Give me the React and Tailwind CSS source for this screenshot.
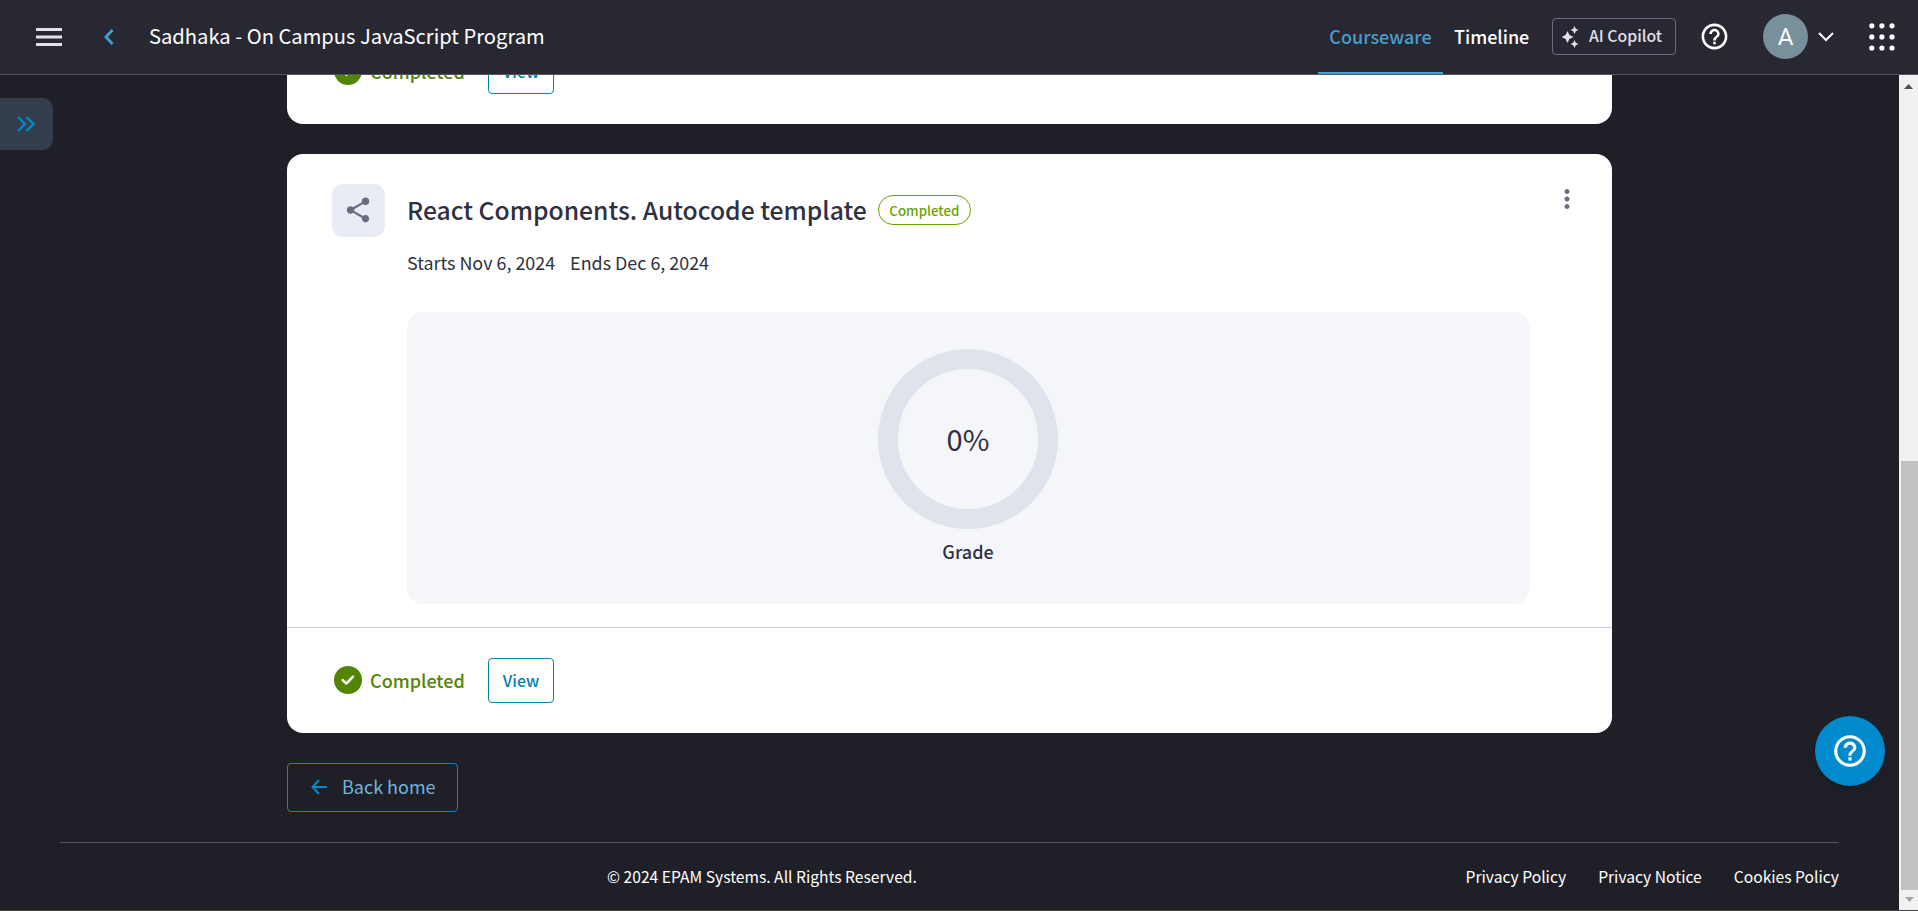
import { MdHelpOutline, MdShare, MdMoreVert } from "react-icons/md";

const font = "font-['Noto_Sans_CJK_SC','Noto_Sans_CJK_JP',sans-serif]";

function StatusRow() {
  return (
    <div className="flex h-[45px] shrink-0 items-center pl-[47px]">
      <svg width="28" height="28" viewBox="0 0 28 28" className="mb-[1px] shrink-0">
        <circle cx="14" cy="14" r="14" fill="#528500" />
        <path d="M8.8 14.2l3.6 3.4 6.6-7" fill="none" stroke="#fff" strokeWidth="2.6" strokeLinecap="round" strokeLinejoin="round" />
      </svg>
      <span className="ml-[8px] w-[94px] whitespace-nowrap pb-[2px] text-[18px] font-medium leading-6 text-[#528500]">Completed</span>
      <button className="ml-[24px] flex h-[45px] w-[66px] items-center justify-center rounded-[4px] border border-[#0083ad] pb-[2px] text-[16px] font-medium text-[#0083ad]">View</button>
    </div>
  );
}

function Header() {
  return (
    <header className="flex h-[75px] shrink-0 items-center border-b border-[#55555f] bg-[#282833]">
      <svg className="ml-9 shrink-0" width="26" height="18" viewBox="0 0 26 18" fill="#e1e0eb">
        <rect width="26" height="3" />
        <rect y="7.5" width="26" height="3" />
        <rect y="15" width="26" height="3" />
      </svg>
      <svg className="ml-[42px] shrink-0" width="10" height="16" viewBox="0 0 10 16" fill="none" stroke="#459fce" strokeWidth="2.8">
        <path d="M8.5 1L2 8l6.500 7" />
      </svg>
      <h1 className="ml-[35px] whitespace-nowrap pb-[2px] text-[20.16px] leading-7 text-white">Sadhaka - On Campus JavaScript Program</h1>
      <nav className="ml-auto flex h-full items-center">
        <a className="flex h-full w-[125px] items-center justify-center border-b-2 border-[#459fce] text-[18px] font-medium text-[#459fce]">Courseware</a>
        <a className="ml-[11px] w-[75px] pb-[2px] text-[18px] font-medium text-white">Timeline</a>
      </nav>
      <button className="mb-[1px] ml-[23px] flex h-[37px] w-[124px] items-center rounded-[4px] border border-[#6c6b7f] pl-[9px] text-[15.8px] font-medium text-[#e1e0eb]">
        <svg width="17" height="22" viewBox="0 0 17 22" fill="#e1e0eb" className="mr-[10px] shrink-0">
          <path d="M5.500 5l1.900 4.100L11.500 11l-4.100 1.900L5.500 17l-1.900-4.100L-.5 11l4.100-1.900z" />
          <path d="M12.500 0l1.300 2.700L16.500 4l-2.700 1.300L12.500 8l-1.300-2.700L8.500 4l2.700-1.300z" />
          <path d="M12.500 14l1.300 2.700L16.500 18l-2.700 1.300L12.500 22l-1.300-2.700L8.500 18l2.700-1.300z" />
        </svg>
        <span className="whitespace-nowrap pb-[1px]">AI Copilot</span>
      </button>
      <MdHelpOutline className="mb-[1px] ml-[22.500px] shrink-0 text-white" size={31} />
      <div className="mb-[1px] ml-[33.500px] flex size-[45px] shrink-0 items-center justify-center rounded-full bg-[#78909c] pt-[1px] font-['Roboto',sans-serif] text-[24px] text-white">A</div>
      <svg className="mb-[1px] ml-[10px] shrink-0" width="16" height="10" viewBox="0 0 16 10" fill="none" stroke="#fff" strokeWidth="2">
        <path d="M1 1l7 7 7-7" />
      </svg>
      <svg className="ml-[35px] mr-[23px] shrink-0" width="26" height="28" viewBox="0 0 26 28" fill="#fff">
        {[2.8, 13.9, 25].map((y) => [2.8, 12.9, 23].map((x) => <circle key={x + "-" + y} cx={x} cy={y} r="2.600" />))}
      </svg>
    </header>
  );
}

function Scrollbar() {
  return (
    <div className="flex w-[19px] shrink-0 flex-col items-end bg-[#f1f1f1]">
      <svg width="18" height="21" viewBox="0 0 18 21" fill="#505050"><path d="M4 14l4.500-5 4.500 5z" /></svg>
      <div className="mt-[365px] h-[429px] w-[17px] bg-[#c1c1c1]" />
      <svg className="shrink-0" width="18" height="20" viewBox="0 0 18 20" fill="#a3a3a3"><path d="M5 7h9l-4.500 5z" /></svg>
    </div>
  );
}

export default function App() {
  return (
    <div className={"flex h-[911px] w-[1918px] flex-col overflow-hidden bg-[#1f1f27] " + font}>
      <Header />
      <div className="flex h-[835px] shrink-0">
        <div className="flex h-full w-[1899px] shrink-0 flex-col overflow-hidden">
          <div className="flex h-[767px] shrink-0">
            <div className="w-[287px] shrink-0 pt-[23px]">
              <button className="flex h-[52px] w-[53px] items-center rounded-r-[11px] bg-[#333e4d] pl-[17px]">
                <svg width="18" height="16" viewBox="0 0 18 16" fill="none" stroke="#008ace" strokeWidth="2.400">
                  <path d="M1 1l7 7-7 7M9.500 1l7 7-7 7" />
                </svg>
              </button>
            </div>
            <main className="flex w-[1325px] shrink-0 flex-col">
              <section className="flex h-[49px] shrink-0 flex-col justify-end overflow-hidden rounded-b-[16px] bg-white pb-[30px]">
                <StatusRow />
              </section>
              <section className="mt-[30px] flex h-[579px] shrink-0 flex-col rounded-[16px] bg-white">
                <div className="flex h-[158px] pt-[30px]">
                  <div className="ml-[45px] flex size-[53px] items-center justify-center rounded-[11px] bg-[#e9ecf5] pb-[2px] pr-[2px]">
                    <MdShare size={30} className="text-[#6c6b7f]" />
                  </div>
                  <div className="ml-[22px] flex flex-col">
                    <div className="flex h-[52px] items-center">
                      <h2 className="whitespace-nowrap pb-[1px] text-[24.7px] font-medium text-[#303040]">React Components. Autocode template</h2>
                      <span className="ml-[11px] flex h-[30px] w-[93px] items-center justify-center rounded-full border border-[#67a300] pt-[1px] text-[13.3px] font-medium text-[#67a300]">Completed</span>
                    </div>
                    <div className="mt-[13px] flex gap-[15px] text-[17.9px] leading-[27px] text-[#303040]">
                      <span>Starts Nov 6, 2024</span>
                      <span>Ends Dec 6, 2024</span>
                    </div>
                  </div>
                  <MdMoreVert size={30} className="ml-auto mr-[30px] text-[#6c6b7f]" />
                </div>
                <div className="ml-[120px] flex h-[292px] w-[1123px] flex-col items-center rounded-[16px] bg-[#f4f6fa] pr-[1px] pt-[37px]">
                  <div className="flex size-[180px] items-center justify-center rounded-full border-[20px] border-[#e0e3eb] text-[29px] text-[#303040]">0%</div>
                  <span className="mt-[9px] text-[18px] font-medium leading-[27px] text-[#303040]">Grade</span>
                </div>
                <div className="mt-[23px] border-t border-[#cdcdd8] pt-[30px]">
                  <StatusRow />
                </div>
              </section>
              <button className="mt-[30px] flex h-[49px] w-[171px] items-center rounded-[4px] border border-[#008ace] pb-[1px] pl-[23px] text-[18px] text-[#70b4dd]">
                <svg width="16" height="16" viewBox="0 0 16 16" fill="none" stroke="#008ace" strokeWidth="2" className="mr-[15px] shrink-0">
                  <path d="M8 1L1.500 8 8 15M1.500 8H16" />
                </svg>
                <span className="whitespace-nowrap pb-[1px]">Back home</span>
              </button>
            </main>
            <div className="flex grow flex-col items-end justify-end pb-14 pr-[14px]">
              <button className="flex size-[70px] items-center justify-center rounded-full bg-[#008ace] shadow-md">
                <MdHelpOutline size={38} className="text-white" />
              </button>
            </div>
          </div>
          <footer className="ml-[60px] flex h-[68px] w-[1779px] shrink-0 items-start border-t border-[#55555f] pt-[22px] text-[15.65px] leading-6 text-white">
            <span className="ml-[547px] whitespace-nowrap">© 2024 EPAM Systems. All Rights Reserved.</span>
            <nav className="ml-auto flex gap-8 whitespace-nowrap">
              <a>Privacy Policy</a>
              <a>Privacy Notice</a>
              <a>Cookies Policy</a>
            </nav>
          </footer>
        </div>
        <Scrollbar />
      </div>
      <div className="h-px shrink-0 bg-[#444]" />
    </div>
  );
}
